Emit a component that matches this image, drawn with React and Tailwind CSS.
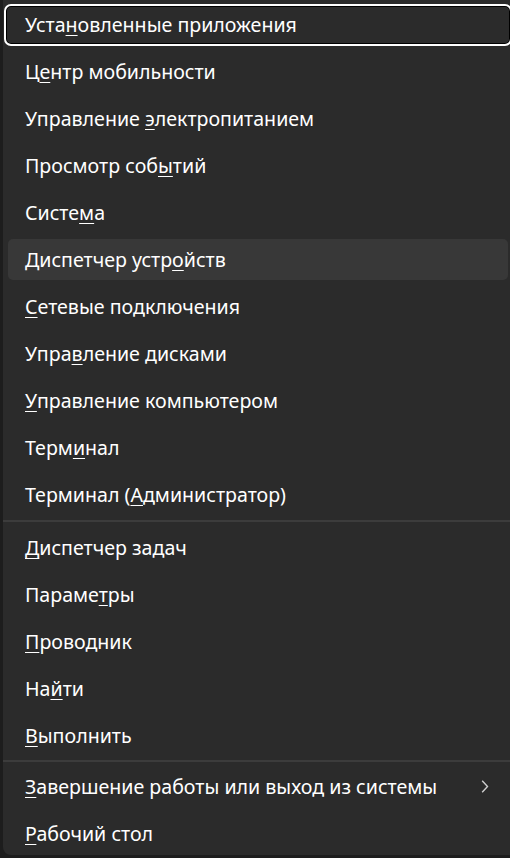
import React from 'react';

const groups = [
  [
    ['Уста', 'н', 'овленные приложения'],
    ['Ц', 'е', 'нтр мобильности'],
    ['Управление ', 'э', 'лектропитанием'],
    ['Просмотр соб', 'ы', 'тий'],
    ['Систе', 'м', 'а'],
    ['Диспетчер устр', 'о', 'йств'],
    ['', 'С', 'етевые подключения'],
    ['Упра', 'в', 'ление дисками'],
    ['', 'У', 'правление компьютером'],
    ['Терм', 'и', 'нал'],
    ['Терминал (', 'А', 'дминистратор)'],
  ],
  [
    ['', 'Д', 'испетчер задач'],
    ['Параме', 'т', 'ры'],
    ['', 'П', 'роводник'],
    ['На', 'й', 'ти'],
    ['', 'В', 'ыполнить'],
  ],
  [
    ['', 'З', 'авершение работы или выход из системы', true],
    ['', 'Р', 'абочий стол'],
  ],
];

function Label({ parts }) {
  const [pre, key, post] = parts;
  return (
    <span className="whitespace-nowrap">
      {pre}
      <span className="underline decoration-1 underline-offset-[3px]">{key}</span>
      {post}
    </span>
  );
}

function Item({ parts, focused, hovered }) {
  const sub = parts[3];
  if (focused) {
    return (
      <div className="h-[47px] flex items-center px-px">
        <div className="h-[42px] w-full flex items-center rounded-[7px] border-2 border-white shadow-[inset_0_0_0_1px_#000] pl-[19px]">
          <Label parts={parts} />
        </div>
      </div>
    );
  }
  return (
    <div className="h-[47px] flex items-center px-[5px]">
      <div className={`h-[41px] w-full flex items-center rounded-[5px] pl-[17px] pr-[19px] ${hovered ? 'bg-[#383838]' : ''}`}>
        <Label parts={parts} />
        {sub && (
          <svg className="ml-auto" width="8" height="13" viewBox="0 0 8 13">
            <polyline points="1.2,0.8 6.5,6.5 1.2,12.2" fill="none" stroke="#cfcfcf" strokeWidth="1.4" />
          </svg>
        )}
      </div>
    </div>
  );
}

export default function App() {
  return (
    <div className="w-[510px] h-[858px] bg-[#1d1d1d] overflow-hidden">
      <div
        className="ml-[3px] w-[510px] h-[855px] bg-[#2b2b2b] rounded-bl-[8px] text-white text-[19.6px] leading-none pt-px"
        style={{ fontFamily: '"Noto Sans", "Open Sans", sans-serif' }}
      >
        {groups.map((g, gi) => (
          <div key={gi}>
            {gi > 0 && <div className={`h-[2px] bg-[#3c3c3c] ${gi === 1 ? 'my-[2px]' : 'my-px'}`} />}
            {g.map((parts, i) => (
              <Item key={i} parts={parts} focused={gi === 0 && i === 0} hovered={gi === 0 && i === 5} />
            ))}
          </div>
        ))}
      </div>
    </div>
  );
}
